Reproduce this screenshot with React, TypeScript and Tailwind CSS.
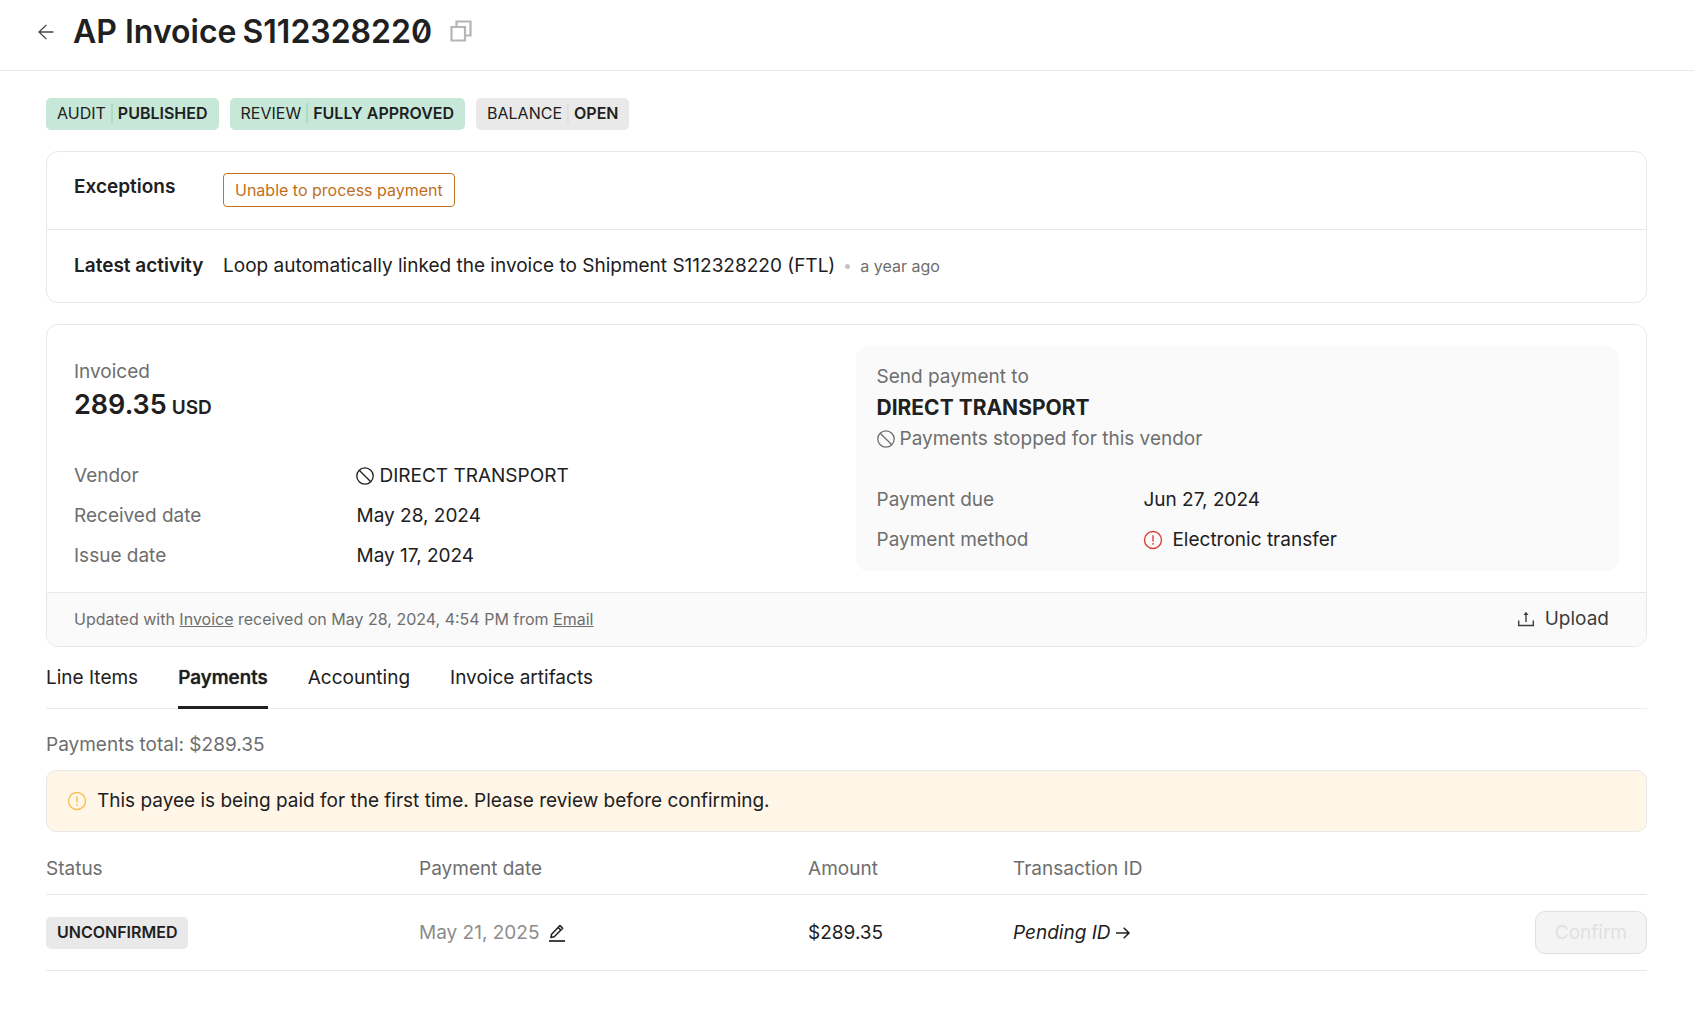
import { useState } from "react";
import type { ReactNode } from "react";
import clsx from "clsx";

const BackIcon = () => (
  <svg className="h-4 w-4" viewBox="0 0 16 16" fill="none" stroke="currentColor" strokeWidth="1.3" aria-hidden="true">
    <path d="M15.5 8H1M8.4 .9 1 8l7.4 7.1" />
  </svg>
);

const CopyIcon = () => (
  <svg className="h-[22px] w-[22px]" viewBox="0 0 22 22" fill="none" stroke="currentColor" strokeWidth="2.2" aria-hidden="true">
    <path d="M1.500 7h13.500v13.500h-13.500zM6.500 7V1.500h14V15.500h-5.500" />
  </svg>
);

const StopIcon = () => (
  <svg className="h-[18px] w-[18px] shrink-0" viewBox="0 0 18 18" fill="none" stroke="currentColor" strokeWidth="1.3" aria-hidden="true">
    <circle cx="9" cy="9" r="8.200" />
    <path d="M3.200 3.200 14.800 14.800" />
  </svg>
);

const AlertIcon = () => (
  <svg className="h-5 w-5 shrink-0" viewBox="0 0 20 20" fill="none" stroke="currentColor" strokeWidth="1.4" aria-hidden="true">
    <circle cx="10" cy="10" r="8.500" />
    <path d="M10 5.300v6.200M10 13v1.700" />
  </svg>
);

const UploadIcon = () => (
  <svg className="h-4 w-4" viewBox="0 0 16 16" fill="none" stroke="currentColor" strokeWidth="1.4" aria-hidden="true">
    <path d="M.7 9.500v5h14.600v-5M8 11V2.200" />
    <path d="M8 .8 10.500 4h-5z" fill="currentColor" stroke="none" />
  </svg>
);

const EditIcon = () => (
  <svg className="h-[18px] w-[18px]" viewBox="0 0 18 18" fill="none" stroke="currentColor" strokeWidth="1.5" aria-hidden="true">
    <path d="M1 17h16" strokeWidth="1.700" />
    <path d="M3 13.500 3.600 10.200 12 1.600l2.700 2.600-8.500 8.600zM10.200 3.500l2.600 2.600" strokeLinejoin="round" />
  </svg>
);

const ArrowRightIcon = () => (
  <svg className="h-4 w-4" viewBox="0 0 16 16" fill="none" stroke="currentColor" strokeWidth="1.5" aria-hidden="true">
    <path d="M1 8h13M8.700 2.700 14 8l-5.300 5.300" />
  </svg>
);

interface StatusTagProps {
  label?: string;
  value: string;
  tone: "green" | "gray";
}

const StatusTag = ({ label, value, tone }: StatusTagProps) => (
  <span
    className={clsx(
      "inline-flex h-8 items-center rounded-[5px] px-[11px] pb-0.5 text-base",
      tone === "green" ? "bg-[#c7e8d8]" : "bg-[#e9e9e9]"
    )}
  >
    {label && (
      <>
        <span>{label}</span>
        <span className={clsx("mx-[5px] h-5 w-0.5", tone === "green" ? "bg-[#a9dcc1]" : "bg-[#e0e0e0]")} />
      </>
    )}
    <span className="font-semibold">{value}</span>
  </span>
);

const DetailRow = ({ label, children }: { label: string; children: ReactNode }) => (
  <div className="grid grid-cols-[37%_1fr] items-center">
    <dt className="text-[#6e6e6e]">{label}</dt>
    <dd className="flex items-center">{children}</dd>
  </div>
);

const tabs = ["Line Items", "Payments", "Accounting", "Invoice artifacts"];

const App = () => {
  const [activeTab, setActiveTab] = useState("Payments");

  return (
    <div className="min-h-screen bg-white font-[Inter,sans-serif] text-[19px] leading-7 text-[#202020]">
      <header className="flex items-center border-b border-[#e8e8e8] px-[38px] pt-[14px] pb-5">
        <button aria-label="Back" className="mr-[19px] text-[#444]">
          <BackIcon />
        </button>
        <h1 className="flex gap-1.5 text-[32px] leading-9 font-semibold">
          <span>AP Invoice</span>
          <span className="slashed-zero">S112328220</span>
        </h1>
        <button aria-label="Copy" className="ml-[18px] pb-0.5 text-[#b5b5b5]">
          <CopyIcon />
        </button>
      </header>

      <main className="pt-[27px] pr-[47px] pl-[46px]">
        <div className="flex gap-[11px]">
          <StatusTag label="AUDIT" value="PUBLISHED" tone="green" />
          <StatusTag label="REVIEW" value="FULLY APPROVED" tone="green" />
          <StatusTag label="BALANCE" value="OPEN" tone="gray" />
        </div>

        <section className="mt-[21px] rounded-xl border border-[#e8e8e8]">
          <div className="flex items-start border-b border-[#e8e8e8] px-[27px] pt-[21px] pb-[22px]">
            <h2 className="w-[149px] font-semibold">Exceptions</h2>
            <span className="rounded border border-[#c4751d] px-[11px] py-1 text-base text-[#bf6f1b]">
              Unable to process payment
            </span>
          </div>
          <div className="flex items-center px-[27px] py-[22px]">
            <h2 className="w-[149px] font-semibold">Latest activity</h2>
            <p>Loop automatically linked the invoice to Shipment S112328220 (FTL)</p>
            <span className="mx-2.5 h-[5px] w-[5px] rounded-full bg-[#c4c4c4]" />
            <span className="text-base text-[#6e6e6e]">a year ago</span>
          </div>
        </section>

        <section className="mt-[21px] overflow-hidden rounded-xl border border-[#e8e8e8]">
          <div className="grid grid-cols-2 gap-[18px] px-[27px] py-[21px]">
            <div className="pt-3">
              <p className="text-[#6e6e6e]">Invoiced</p>
              <p className="flex items-baseline gap-[5px] text-[27px] leading-[38px] font-semibold">
                289.35 <span className="text-[19px] leading-7">USD</span>
              </p>
              <dl className="mt-[38px] space-y-3">
                <DetailRow label="Vendor">
                  <StopIcon />
                  <span className="ml-[5px]">DIRECT TRANSPORT</span>
                </DetailRow>
                <DetailRow label="Received date">May 28, 2024</DetailRow>
                <DetailRow label="Issue date">May 17, 2024</DetailRow>
              </dl>
            </div>

            <div className="rounded-xl bg-[#fafafa] px-[21px] py-[17px]">
              <p className="text-[#6e6e6e]">Send payment to</p>
              <p className="text-[21px] leading-[34px] font-bold">DIRECT TRANSPORT</p>
              <p className="flex items-center text-[#6e6e6e]">
                <StopIcon />
                <span className="ml-[5px]">Payments stopped for this vendor</span>
              </p>
              <dl className="mt-[33px] space-y-3">
                <DetailRow label="Payment due">Jun 27, 2024</DetailRow>
                <DetailRow label="Payment method">
                  <span className="text-[#d9413c]">
                    <AlertIcon />
                  </span>
                  <span className="ml-[9px]">Electronic transfer</span>
                </DetailRow>
              </dl>
            </div>
          </div>

          <footer className="flex items-center justify-between border-t border-[#e8e8e8] bg-[#fafafa] pt-3 pr-[37px] pb-[13px] pl-[27px]">
            <p className="text-base text-[#6e6e6e]">
              Updated with <a href="#invoice" className="underline">Invoice</a> received on May 28, 2024, 4:54 PM from{" "}
              <a href="#email" className="underline">Email</a>
            </p>
            <button className="flex items-center gap-[11px] text-[#3d3d3d]">
              <UploadIcon />
              Upload
            </button>
          </footer>
        </section>

        <nav className="flex gap-10 border-b border-[#ebebeb]" role="tablist">
          {tabs.map((tab) => (
            <button
              key={tab}
              role="tab"
              aria-selected={tab === activeTab}
              onClick={() => setActiveTab(tab)}
              className={clsx(
                "-mb-px border-b-3 pt-[17px] pb-3.5",
                tab === activeTab
                  ? "border-[#202020] font-medium [text-shadow:0_0_1px_currentColor]"
                  : "border-transparent"
              )}
            >
              {tab}
            </button>
          ))}
        </nav>

        <p className="mt-[22px] text-[#6e6e6e]">Payments total: $289.35</p>

        <div className="mt-[11px] flex items-center rounded-[10px] border border-[#e8e8e8] bg-[#fff6e8] px-5 py-4">
          <span className="text-[#f7c04f]">
            <AlertIcon />
          </span>
          <p className="ml-2.5">This payee is being paid for the first time. Please review before confirming.</p>
        </div>

        <table className="mt-[21px] w-full table-fixed text-left">
          <colgroup>
            <col className="w-[23.3%]" />
            <col className="w-[24.3%]" />
            <col className="w-[12.8%]" />
            <col />
            <col />
          </colgroup>
          <thead>
            <tr className="border-b border-[#e8e8e8] text-[#6e6e6e]">
              <th className="pt-0.5 pb-[11px] font-normal">Status</th>
              <th className="pt-0.5 pb-[11px] font-normal">Payment date</th>
              <th className="pt-0.5 pb-[11px] font-normal">Amount</th>
              <th className="pt-0.5 pb-[11px] font-normal">Transaction ID</th>
              <td />
            </tr>
          </thead>
          <tbody>
            <tr className="border-b border-[#e8e8e8]">
              <td>
                <StatusTag value="UNCONFIRMED" tone="gray" />
              </td>
              <td>
                <div className="flex items-center text-[#8c8c8c]">
                  May 21, 2025
                  <button aria-label="Edit payment date" className="ml-[9px] text-[#202020]">
                    <EditIcon />
                  </button>
                </div>
              </td>
              <td>$289.35</td>
              <td>
                <a href="#transaction" className="flex items-center gap-[5px] italic">
                  Pending ID
                  <ArrowRightIcon />
                </a>
              </td>
              <td className="py-4 text-right">
                <button
                  disabled
                  className="h-[43px] rounded-[10px] border border-[#e0e0e0] bg-[#f4f4f4] px-[19px] align-top text-[#e0e0e0]"
                >
                  Confirm
                </button>
              </td>
            </tr>
          </tbody>
        </table>
      </main>
    </div>
  );
};

export default App;
